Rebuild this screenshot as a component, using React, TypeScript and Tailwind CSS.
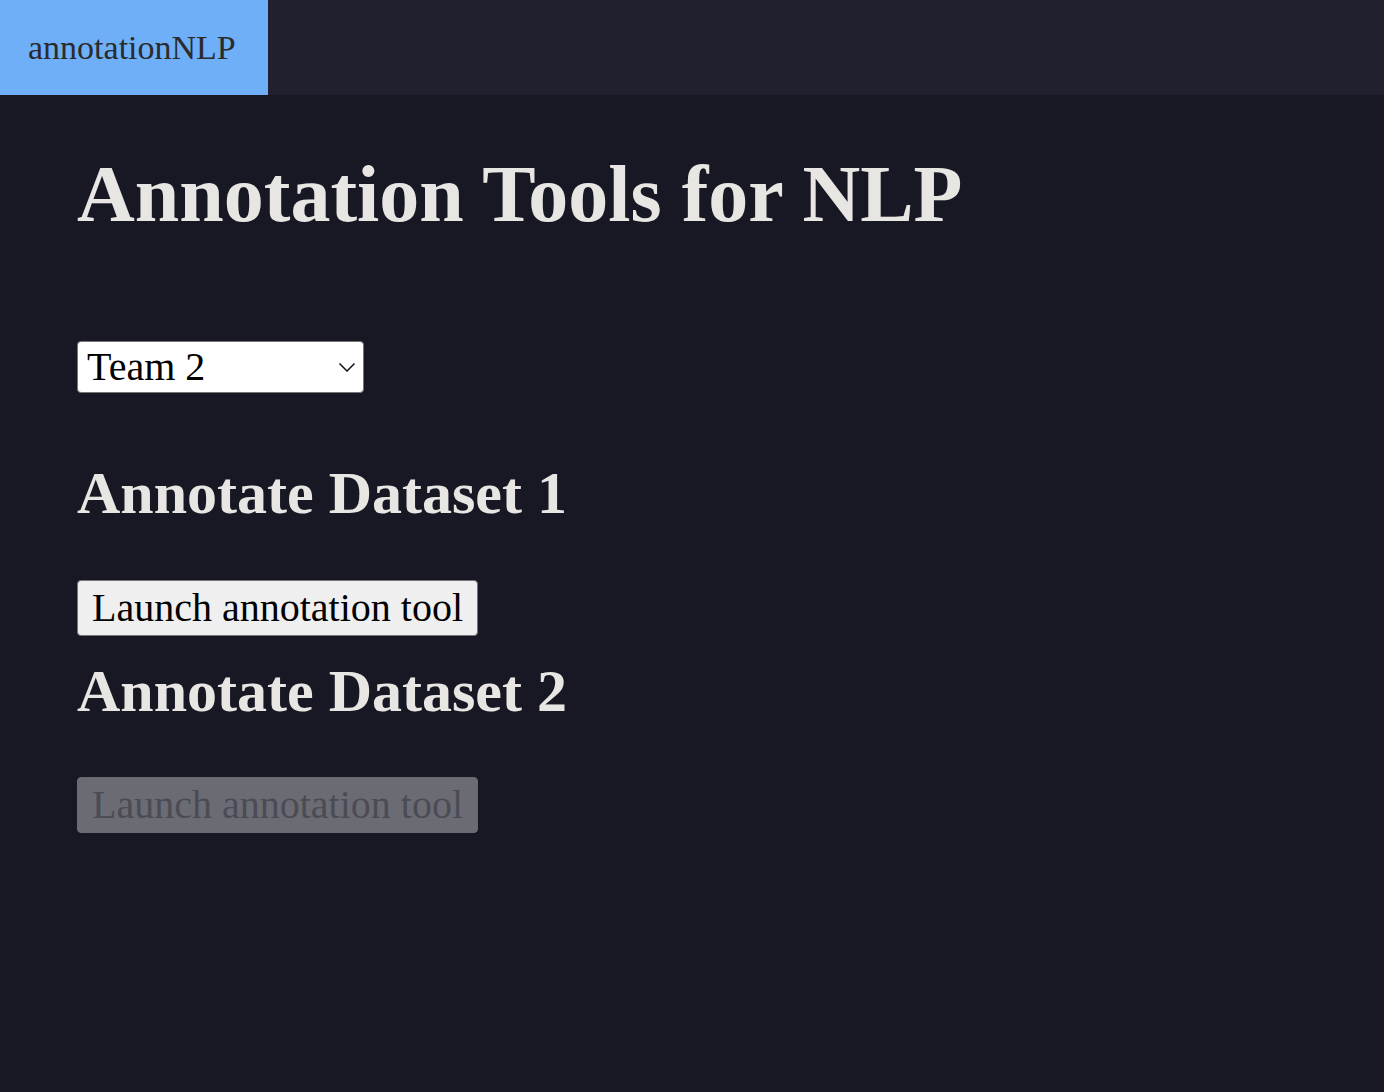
const serif = "font-['Liberation_Serif','Times_New_Roman',serif]";

function Chevron() {
  return (
    <svg width="18" height="10" viewBox="0 0 18 10" fill="none" stroke="#111" strokeWidth="1.5" aria-hidden="true">
      <path d="M1.5 1.5l7.5 7.5 7.5-7.5" />
    </svg>
  );
}

function LaunchButton({ disabled }: { disabled?: boolean }) {
  const base = 'flex h-[56px] items-center rounded-[4px] border px-[14px] text-[40px] leading-none';
  const look = disabled
    ? 'border-[#6a6a72] bg-[#6b6b73] text-[#4b4b55] cursor-default'
    : 'border-[#767676] bg-[#efefef] text-black';
  return (
    <button type="button" disabled={disabled} className={`${base} ${look}`}>
      Launch annotation tool
    </button>
  );
}

export default function App() {
  return (
    <div className={`min-h-[1092px] w-full bg-[#181825] ${serif}`}>
      <nav className="flex h-[95px] bg-[#20202f]">
        <div className="flex w-[268px] items-center bg-[#6eaff8] pl-[28px] text-[34px] text-[#2b2b2b]">
          annotationNLP
        </div>
      </nav>

      <main className="flex flex-col items-start pl-[77px]">
        <h1 className="mt-[59px] text-[80px] font-bold leading-[80px] text-[#e8e6e3]">
          Annotation Tools for NLP
        </h1>

        <div className="relative mt-[107px]">
          <select
            defaultValue="2"
            className="h-[52px] w-[287px] appearance-none rounded-[4px] border border-[#767676] bg-white pl-[9px] text-[40px] leading-none text-black outline-none"
          >
            <option value="1">Team 1</option>
            <option value="2">Team 2</option>
          </select>
          <div className="pointer-events-none absolute right-[8px] top-[21px]">
            <Chevron />
          </div>
        </div>

        <h2 className="mt-[70px] text-[60px] font-bold leading-[60px] text-[#e8e6e3]">Annotate Dataset 1</h2>
        <div className="mt-[57px]">
          <LaunchButton />
        </div>

        <h2 className="mt-[25px] text-[60px] font-bold leading-[60px] text-[#e8e6e3]">Annotate Dataset 2</h2>
        <div className="mt-[56px]">
          <LaunchButton disabled />
        </div>
      </main>
    </div>
  );
}
